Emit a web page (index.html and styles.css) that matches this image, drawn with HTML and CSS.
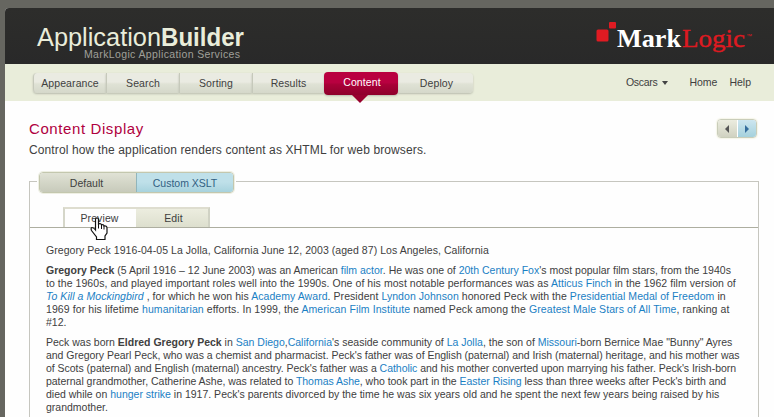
FILE: index.html
```
<!DOCTYPE html>
<html lang="en">
<head>
<meta charset="utf-8">
<title>Application Builder</title>
<link rel="stylesheet" href="styles.css">
</head>
<body>
<div class="page">
  <header class="masthead">
    <svg class="brand" width="220" height="48" viewBox="0 0 220 48">
      <text class="brand-name" x="1" y="31" textLength="124" lengthAdjust="spacingAndGlyphs">Application</text>
      <text class="brand-name strong" x="125" y="31" textLength="83" lengthAdjust="spacingAndGlyphs">Builder</text>
      <text class="brand-sub" x="48" y="42.5" textLength="156">MarkLogic Application Services</text>
    </svg>
    <svg class="logo" width="160" height="40" viewBox="0 0 160 40">
      <rect x="0.5" y="9.5" width="12" height="12" rx="1.5" fill="#e01b22"/>
      <rect x="13" y="2" width="7" height="6.5" rx="1" fill="#e01b22"/>
      <text class="logo-text" x="21" y="27" fill="#fff" textLength="64" lengthAdjust="spacingAndGlyphs">Mark</text>
      <text class="logo-text light" x="86" y="27" fill="#dd1a21" textLength="63" lengthAdjust="spacingAndGlyphs">Logic</text>
      <text class="logo-tm" x="150" y="18" fill="#dd1a21">™</text>
    </svg>
  </header>
  <div class="toolbar">
    <nav class="steps">
      <a class="step">Appearance</a><a class="step">Search</a><a class="step">Sorting</a><a class="step">Results</a><a class="step active">Content</a><a class="step">Deploy</a>
    </nav>
    <div class="links"><a class="menu">Oscars<i class="caret"></i></a><a>Home</a><a>Help</a></div>
  </div>
  <main>
    <div class="heading">
      <div>
        <h1>Content Display</h1>
        <p class="lead">Control how the application renders content as XHTML for web browsers.</p>
      </div>
      <div class="pager"><a class="prev"><i></i></a><a class="next"><i></i></a></div>
    </div>
    <section class="panel">
      <div class="modes"><a>Default</a><a class="on">Custom XSLT</a></div>
      <div class="tabs"><a class="on">Preview</a><a>Edit</a></div>
      <article>
        <p><span class="line loose">Gregory Peck 1916-04-05 La Jolla, California June 12, 2003 (aged 87) Los Angeles, California</span></p>
        <p><span class="line"><b>Gregory Peck</b> (5 April 1916 – 12 June 2003) was an American <a>film actor</a>. He was one of <a>20th Century Fox</a>'s most popular film stars, from the 1940s</span>
        <span class="line loose">to the 1960s, and played important roles well into the 1990s. One of his most notable performances was as <a>Atticus Finch</a> in the 1962 film version of</span>
        <span class="line loose"><a><em>To Kill a Mockingbird</em></a> , for which he won his <a>Academy Award</a>. President <a>Lyndon Johnson</a> honored Peck with the <a>Presidential Medal of Freedom</a> in</span>
        <span class="line looser">1969 for his lifetime <a>humanitarian</a> efforts. In 1999, the <a>American Film Institute</a> named Peck among the <a>Greatest Male Stars of All Time</a>, ranking at</span>
        <span class="line">#12.</span></p>
        <p><span class="line">Peck was born <b>Eldred Gregory Peck</b> in <a>San Diego</a>,<a>California</a>'s seaside community of <a>La Jolla</a>, the son of <a>Missouri</a>-born Bernice Mae "Bunny" Ayres</span>
        <span class="line tight">and Gregory Pearl Peck, who was a chemist and pharmacist. Peck's father was of English (paternal) and Irish (maternal) heritage, and his mother was</span>
        <span class="line tight">of Scots (paternal) and English (maternal) ancestry. Peck's father was a <a>Catholic</a> and his mother converted upon marrying his father. Peck's Irish-born</span>
        <span class="line tight">paternal grandmother, Catherine Ashe, was related to <a>Thomas Ashe</a>, who took part in the <a>Easter Rising</a> less than three weeks after Peck's birth and</span>
        <span class="line">died while on <a>hunger strike</a> in 1917. Peck's parents divorced by the time he was six years old and he spent the next few years being raised by his</span>
        <span class="line">grandmother.</span></p>
      </article>
    </section>
  </main>
</div>
<svg class="cursor" width="18" height="24" viewBox="0 0 18 24">
  <path d="M5.500 13V2.500Q5.500 1 7 1T8.500 2.500V7Q11 6 11.500 8Q13.500 7 14 9Q17 8.500 17 11V16L15 19V22.500H6.500V20L1.500 13.500Q.5 11 2 10.500Q3.500 10.500 5.500 13Z" fill="#fff" stroke="#111" stroke-width="1.200"/>
  <path d="M8.500 7V11.500M11.500 8V12M14 9V12.500" stroke="#111" fill="none"/>
</svg>
</body>
</html>
```
FILE: styles.css
```
* { box-sizing: border-box; }
body {
  margin: 0;
  height: 417px;
  overflow: hidden;
  padding: 8px 0 0 5px;
  background: #666660;
  font: 10.5px/13px "Liberation Sans", Arial, sans-serif;
  color: #404040;
}
.page { height: 409px; overflow: hidden; background: #fefefe; border-top-left-radius: 4px; }
.masthead {
  height: 56px;
  display: flex;
  justify-content: space-between;
  padding: 7px 18px 0 31px;
  background: linear-gradient(#2d2d2b, #292929);
}
.brand-name { font-size: 25px; fill: #e9edda; }
.strong { font-weight: bold; }
.brand-sub { font-size: 10.5px; fill: #a0a09a; }
.logo { margin-top: 5px; }
.logo-text { font: bold 25px "Liberation Serif", serif; }
.logo-text.light { font-weight: normal; stroke: #dd1a21; stroke-width: .4px; }
.logo-tm { font-size: 6px; }
.toolbar {
  height: 37px;
  display: flex;
  justify-content: space-between;
  padding: 8px 23px 0 28px;
  background: #e9edda;
}
.steps { display: grid; grid-template-columns: 73px 73px 73px 72px 74px 75px; height: 22px; margin-top: 1px; }
.step {
  height: 20px;
  text-align: center;
  line-height: 21px;
  letter-spacing: .1px;
  border-left: 1px solid #c6c9bb;
  background: linear-gradient(#eaebe2 0 45%, #dfe2d5 55%, #d5d8ca);
  box-shadow: 0 1px 2px #b9bcae;
}
.step:first-child { border-radius: 4px 0 0 4px; }
.step:last-child { border-radius: 0 4px 4px 0; border-left: 0; padding-left: 2px; }
.step.active {
  position: relative;
  height: 23px;
  margin-top: -1px;
  padding-left: 2px;
  border: 0;
  border-radius: 4px;
  color: #fff;
  background: linear-gradient(#b90040 0 45%, #a80037 55%, #8e002b);
  z-index: 1;
}
.step.active::after {
  content: "";
  position: absolute;
  left: 28px;
  top: 23px;
  border: 8px solid transparent;
  border-top-color: #98002e;
  border-bottom: 0;
}
.links { display: flex; gap: 12px; line-height: 21px; }
.menu { display: flex; align-items: center; height: 21px; margin-right: 9px; letter-spacing: -.3px; }
.caret { margin-left: 5px; border: 3px solid transparent; border-top: 4px solid #444; border-bottom: 0; }
main { padding: 19px 15px 0 24px; }
.heading { display: flex; justify-content: space-between; height: 61px; }
h1 { margin: 0; font: 15px/18px "Liberation Sans", Arial, sans-serif; letter-spacing: .6px; color: #b00040; }
.lead { margin: 5px 0 0; font-size: 12px; line-height: 14px; letter-spacing: .12px; }
.pager { display: flex; width: 40px; height: 19px; margin: -1px 2px 0 0; border-radius: 4px; overflow: hidden; border: 1px solid #c9cdb9; box-shadow: 0 0 2px #e0dfb8; }
.pager a { flex: 1; display: flex; align-items: center; justify-content: center; background: linear-gradient(#ebecdf, #d0d2c1); }
.pager .next { background: linear-gradient(#cde6f0, #a5d1dc); border-left: 1px solid #fff; }
.pager i { border: 4px solid transparent; }
.pager .prev i { border-right-color: #555; border-left: 0; }
.pager .next i { border-left-color: #356d9c; border-right: 0; }
.panel { border: 1px solid #c6c6bf; height: 260px; }
.modes {
  display: grid;
  grid-template-columns: 96px 1fr;
  width: 195px;
  height: 21px;
  margin: -10px 0 0 9px;
  border: 1px solid #c3c7ae;
  border-radius: 4px;
  overflow: hidden;
  box-shadow: 0 0 0 1px #eeefe3, 0 0 0 2px #fefefe;
}
.modes a { padding-right: 3px; text-align: center; line-height: 20px; background: linear-gradient(#e0e2d5, #c6c9b9); }
.modes .on { padding: 0; color: #315f82; background: linear-gradient(#bfe0e9 45%, #a5d1dc); border-left: 1px solid #91b5bb; }
.tabs { display: flex; height: 35px; padding: 14px 0 0 33px; border-bottom: 1px solid #adaea0; }
.tabs a {
  width: 74px;
  height: 20px;
  padding-left: 3px;
  text-align: center;
  line-height: 19px;
  letter-spacing: .1px;
  background: linear-gradient(#eceddf, #dddfce);
  border-top: 2px solid #deddcf;
  border-right: 2px solid #d0d2c4;
}
.tabs .on { width: 73px; padding: 0 2px 0 0; background: #fefefe; border-left: 2px solid #d5d6c9; border-right: 0; }
article { padding: 16px 0 0 16px; }
article p { margin: 0 0 7px; }
article a { color: #1a80c4; }
.line { display: block; white-space: nowrap; }
.loose { letter-spacing: .055px; }
.looser { letter-spacing: .09px; }
.tight { letter-spacing: -.028px; }
.cursor { position: absolute; left: 90px; top: 217px; }
```
